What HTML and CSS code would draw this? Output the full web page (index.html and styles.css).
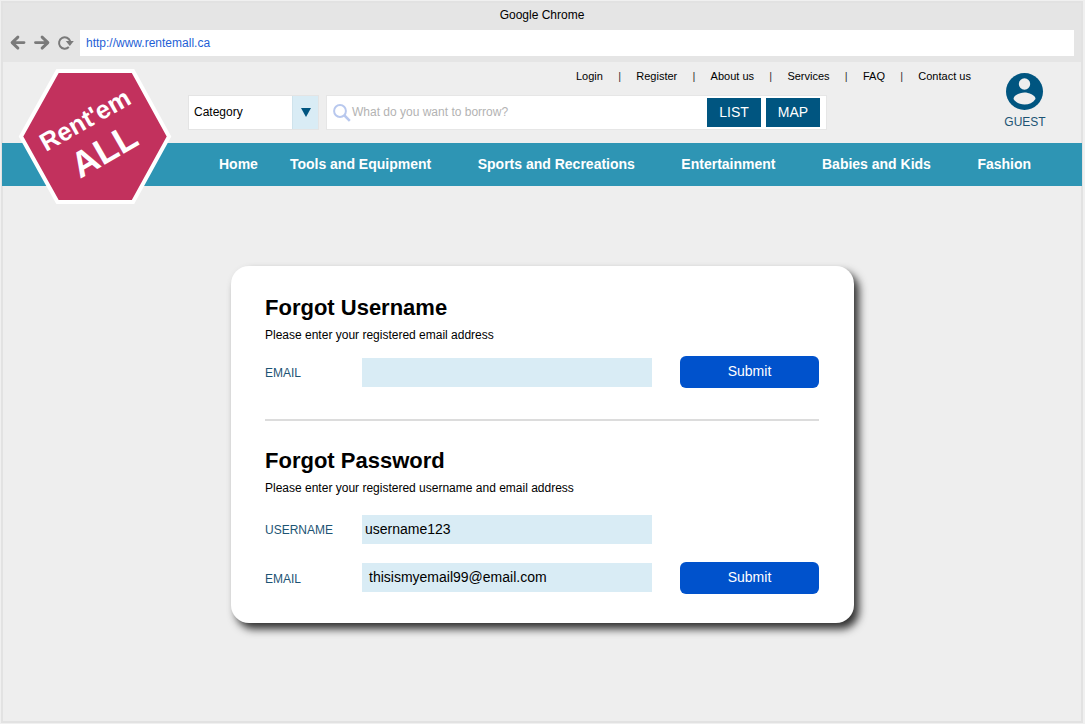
FILE: index.html
```html
<!DOCTYPE html>
<html lang="en">
<head>
<meta charset="utf-8">
<title>Rent'em ALL</title>
<link rel="stylesheet" href="styles.css">
</head>
<body>
<div class="window">
  <div class="chrome">
    <div class="chrome-title">Google Chrome</div>
    <div class="chrome-bar">
      <svg class="chrome-icons" width="66" height="20" viewBox="0 0 66 20" fill="none" stroke="#7a7a7a" stroke-width="2.900" stroke-linecap="round" stroke-linejoin="round">
        <path d="M15 9.600H4M8.900 4.100L3.100 9.600l5.800 5.500"/>
        <path d="M26.500 9.600h11.500M33.100 4.100l5.800 5.500-5.800 5.500"/>
        <path d="M59.800 14A5.700 5.700 0 1 1 61.200 8.300" stroke-width="2" stroke-linecap="butt"/>
        <path d="M56.800 8h8l-4 5z" fill="#7a7a7a" stroke="none"/>
      </svg>
      <div class="url">http://www.rentemall.ca</div>
    </div>
  </div>
  <header class="header">
    <div class="header-main">
      <div class="links">
        <a>Login</a><i>|</i><a>Register</a><i>|</i><a>About us</a><i>|</i><a>Services</a><i>|</i><a>FAQ</a><i>|</i><a>Contact us</a>
      </div>
      <div class="search-row">
        <div class="category">
          <span class="category-label">Category</span>
          <span class="category-toggle"><svg width="10" height="9" viewBox="0 0 10 9"><path d="M0 0h10L5 9z" fill="#005580"/></svg></span>
        </div>
        <div class="search">
          <svg class="search-icon" width="18" height="18" viewBox="0 0 18 18" fill="none" stroke="#b8c8ee"><circle cx="7" cy="7" r="5.900" stroke-width="2"/><path d="M11 11l5.800 5.800" stroke-width="2.500"/></svg>
          <span class="placeholder">What do you want to borrow?</span>
          <span class="mode">LIST</span>
          <span class="mode">MAP</span>
        </div>
      </div>
    </div>
    <div class="guest">
      <svg width="38" height="38" viewBox="0 0 38 38"><circle cx="18.500" cy="19.500" r="18.500" fill="#005580"/><circle cx="18.500" cy="12" r="5.700" fill="#eee"/><path d="M7.500 27c0-4 7-6.500 11-6.500s11 2.500 11 6.500c-2.500 3.700-6.500 5.500-11 5.500s-8.500-1.800-11-5.500z" fill="#eee"/></svg>
      <span>GUEST</span>
    </div>
  </header>
  <nav class="nav">
    <a class="nav-home">Home</a><a>Tools and Equipment</a><a>Sports and Recreations</a><a>Entertainment</a><a>Babies and Kids</a><a>Fashion</a>
  </nav>
  <svg class="logo" width="156" height="140" viewBox="17 67 156 140">
    <polygon points="21,136.500 57.500,71 133,71 169,136.500 133,202 57.500,202" fill="#c2315d" stroke="#fff" stroke-width="4"/>
    <text class="logo-text" font-size="25.500" transform="translate(46 152) rotate(-29.500)">Rent'em</text>
    <text class="logo-text" font-size="36" transform="translate(80 179) rotate(-30)">ALL</text>
  </svg>
  <main class="card">
    <section class="section">
      <h2>Forgot Username</h2>
      <p>Please enter your registered email address</p>
      <div class="row">
        <label>EMAIL</label><div class="field"></div><button class="submit">Submit</button>
      </div>
    </section>
    <section class="section section-password">
      <h2>Forgot Password</h2>
      <p>Please enter your registered username and email address</p>
      <div class="row row-username">
        <label>USERNAME</label><div class="field">username123</div>
      </div>
      <div class="row row-email">
        <label>EMAIL</label><div class="field field-email">thisismyemail99@email.com</div><button class="submit">Submit</button>
      </div>
    </section>
  </main>
</div>
</body>
</html>
```
FILE: styles.css
```css
* { box-sizing: border-box; }
body {
  margin: 0;
  padding: 1px 2px 1px 1px;
  height: 724px;
  background: #f0f0f0;
  font-family: "Liberation Sans", Arial, sans-serif;
  color: #000;
  overflow: hidden;
}
.window {
  position: relative;
  height: 722px;
  border: 2px solid #e2e2e2;
  background: #eee;
}
.chrome { height: 59px; padding-top: 5px; background: #e5e5e5; }
.chrome-title { height: 22px; font-size: 12px; line-height: 14px; text-align: center; }
.chrome-bar { display: flex; align-items: center; padding: 0 7px 0 6px; }
.chrome-icons { flex: none; margin-right: 5px; }
.url {
  flex: 1;
  height: 26px;
  padding-left: 6px;
  background: #fff;
  color: #1f5fd6;
  font-size: 12px;
  line-height: 26px;
}
.header { display: flex; height: 81px; }
.header-main { width: 823px; margin-left: 185px; }
.links {
  display: flex;
  gap: 15.25px;
  padding: 8px 0 0 388px;
  height: 33px;
  font-size: 11px;
  line-height: 13px;
  white-space: nowrap;
}
.links i { font-style: normal; color: #333; }
.search-row { display: flex; gap: 8px; }
.category { display: flex; width: 131px; height: 35px; border: 1px solid #e4e4e4; background: #fff; }
.category-label { flex: 1; padding-left: 5px; font-size: 12px; line-height: 33px; }
.category-toggle {
  display: flex;
  align-items: center;
  justify-content: center;
  width: 26px;
  border-left: 1px solid #cfe3ec;
  background: #d9ecf5;
}
.search {
  display: flex;
  align-items: center;
  width: 501px;
  height: 35px;
  margin-left: -1px;
  padding: 0 6px;
  border: 1px solid #e6e6e6;
  background: #fff;
}
.search-icon { flex: none; }
.placeholder { flex: 1; padding-left: 1px; color: #b3b3b3; font-size: 12px; line-height: 33px; }
.mode {
  width: 54px;
  height: 29px;
  margin-left: 5px;
  background: #005580;
  color: #fff;
  font-size: 14px;
  line-height: 29px;
  text-align: center;
}
.guest {
  display: flex;
  flex-direction: column;
  align-items: center;
  width: 54px;
  margin-left: -13px;
  padding-top: 10px;
  color: #1d5474;
  font-size: 12px;
  line-height: 14px;
}
.guest span { margin-top: 5px; }
.nav {
  display: flex;
  gap: 46.5px;
  height: 43px;
  margin: 0 -1px;
  padding-left: 217px;
  background: #2e95b4;
  color: #fff;
  font-size: 14px;
  font-weight: bold;
  line-height: 42px;
  white-space: nowrap;
}
.nav-home { margin-right: -14.5px; }
.logo { position: absolute; left: 14px; top: 64px; }
.logo-text { font-weight: bold; fill: #fff; }
.card {
  width: 623px;
  height: 357px;
  margin: 80px 0 0 228px;
  padding: 29px 35px 0 34px;
  border-radius: 18px;
  background: #fff;
  box-shadow: 5px 6px 9px rgba(0, 0, 0, 0.8);
}
.section { height: 124px; }
.section-password { height: auto; padding-top: 27px; border-top: 2px solid #dcdcdc; }
h2 { margin: 0; font-size: 22px; line-height: 26px; }
p { margin: 7px 0 14px; font-size: 12px; line-height: 14px; }
.row {
  display: grid;
  grid-template-columns: 97px 290px 167px;
  align-items: center;
  height: 32px;
}
.row label { padding-top: 2px; color: #1d5474; font-size: 12px; }
.field { height: 29px; padding-left: 3px; background: #d9ecf5; font-size: 14px; line-height: 28px; }
.field-email { padding-left: 7px; }
.submit {
  width: 139px;
  height: 32px;
  margin-left: 28px;
  padding: 0 0 2px;
  border: 0;
  border-radius: 6px;
  background: #0052cc;
  color: #fff;
  font: 14px "Liberation Sans", Arial, sans-serif;
}
.row-username { margin-top: 18px; }
.row-email { grid-template-rows: 34px; height: 34px; margin-top: 15px; }
.row-email label { padding-top: 3px; }
.row-email .field { align-self: start; margin-top: 3px; }
.row-email .submit { align-self: end; }
```
